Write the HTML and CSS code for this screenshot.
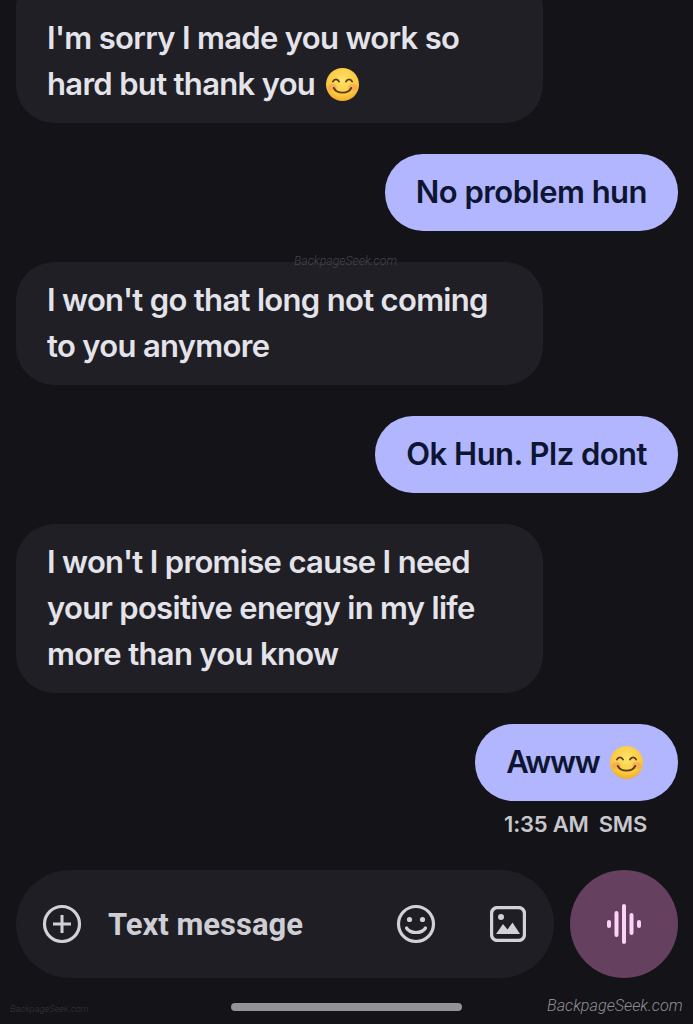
FILE: index.html
```html
<!DOCTYPE html>
<html lang="en">
<head>
    <meta charset="UTF-8">
    <meta name="viewport" content="width=device-width, initial-scale=1.0">
    <title>Messages</title>
    <link rel="stylesheet" href="styles.css">
</head>
<body>
    <svg class="defs" width="0" height="0">
        <defs>
            <radialGradient id="face" cx="50%" cy="38%" r="65%">
                <stop offset="0" stop-color="#fde36a"/>
                <stop offset="0.7" stop-color="#fbc93f"/>
                <stop offset="1" stop-color="#f0a526"/>
            </radialGradient>
            <symbol id="smile" viewBox="0 0 36 36">
                <circle cx="18" cy="18" r="17" fill="url(#face)"/>
                <ellipse cx="7.5" cy="21" rx="4.5" ry="3.5" fill="#f79a5c" opacity="0.6"/>
                <ellipse cx="28.5" cy="21" rx="4.5" ry="3.5" fill="#f79a5c" opacity="0.6"/>
                <path d="M8 15c1.5-3 5-3 6.5 0M21.5 15c1.5-3 5-3 6.5 0" fill="none" stroke="#5b3a14" stroke-width="1.8" stroke-linecap="round"/>
                <path d="M9 21.5c3 6.5 15 6.5 18 0" fill="none" stroke="#5b3a14" stroke-width="2" stroke-linecap="round"/>
            </symbol>
        </defs>
    </svg>

    <div class="thread">
        <div class="bubble received first">I'm sorry I made you work so<br>hard but thank you <svg class="emoji"><use href="#smile"/></svg></div>
        <div class="bubble sent">No problem hun</div>
        <div class="bubble received">I won't go that long not coming<br>to you anymore</div>
        <div class="bubble sent">Ok Hun. Plz dont</div>
        <div class="bubble received">I won't I promise cause I need<br>your positive energy in my life<br>more than you know</div>
        <div class="bubble sent short">Awww <svg class="emoji"><use href="#smile"/></svg></div>
        <div class="meta"><span>1:35 AM</span><span>SMS</span></div>
    </div>

    <div class="composer">
        <div class="input-pill">
            <svg class="icon" viewBox="0 0 40 40" fill="none" stroke="#d2d1d8" stroke-width="3.200">
                <circle cx="20" cy="20" r="17.500"/>
                <path d="M20 11v18M11 20h18" stroke-width="3"/>
            </svg>
            <span class="placeholder">Text message</span>
            <svg class="icon smiley" viewBox="0 0 40 40" fill="none" stroke="#d2d1d8" stroke-width="3.200">
                <circle cx="20" cy="20" r="17.500"/>
                <circle cx="13.500" cy="15.500" r="2.600" fill="#d2d1d8" stroke="none"/>
                <circle cx="26.500" cy="15.500" r="2.600" fill="#d2d1d8" stroke="none"/>
                <path d="M10.500 24c4 6 15 6 19 0" stroke-linecap="round"/>
            </svg>
            <svg class="icon gallery" viewBox="0 0 36 36" fill="none">
                <rect x="1.500" y="1.500" width="33" height="33" rx="6" stroke="#d2d1d8" stroke-width="3.400"/>
                <circle cx="11" cy="11" r="3" fill="#d2d1d8"/>
                <path d="M6 28l7-10 4.500 5.500 5-7L30 28z" fill="#d2d1d8"/>
            </svg>
        </div>
        <div class="mic">
            <svg width="36" height="40" viewBox="0 0 36 40" stroke="#fbd3f6" stroke-width="4" stroke-linecap="round">
                <path d="M3 18v4M10.500 9v22M18 2v36M25.500 11v18M33 18v4"/>
            </svg>
        </div>
    </div>

    <div class="home-bar"></div>

    <span class="mark mark-mid">BackpageSeek.com</span>
    <span class="mark mark-left">BackpageSeek.com</span>
    <span class="mark mark-right">BackpageSeek.com</span>
</body>
</html>
```

FILE: styles.css
```css
* {
    margin: 0;
    padding: 0;
    box-sizing: border-box;
}

body {
    width: 693px;
    height: 1024px;
    overflow: hidden;
    position: relative;
    background: #131318;
    font-family: 'Inter', 'Roboto', sans-serif;
}

.defs {
    position: absolute;
}

.thread {
    display: flex;
    flex-direction: column;
    gap: 31px;
    padding: 0 15px 0 16px;
    margin-top: -30px;
}

.bubble {
    font-size: 31px;
    line-height: 46px;
    font-weight: 600;
    letter-spacing: -0.68px;
    padding: 14.5px 31px 16.5px;
    border-radius: 38px;
}

.received {
    width: 527px;
    align-self: flex-start;
    background: #1f1f25;
    color: #e4e3ea;
}

.first {
    padding-top: 44.5px;
}

.sent {
    align-self: flex-end;
    background: #b1b6ff;
    color: #0e1530;
    letter-spacing: -0.52px;
}

.short {
    letter-spacing: -1.3px;
}

.emoji {
    width: 35px;
    height: 35px;
    vertical-align: -7px;
    margin-left: 3px;
}

.short .emoji {
    margin-right: 3px;
}

.meta {
    align-self: flex-end;
    display: flex;
    gap: 10px;
    margin-top: -21px;
    padding-right: 31px;
    font-size: 22px;
    line-height: 26px;
    font-weight: 600;
    letter-spacing: -0.2px;
    color: #c8c7ce;
}

.composer {
    position: absolute;
    left: 16px;
    right: 15px;
    top: 870px;
    display: flex;
    gap: 16px;
}

.input-pill {
    flex: 1;
    height: 108px;
    display: flex;
    align-items: center;
    padding: 0 28px 0 26px;
    border-radius: 54px;
    background: #1e1e24;
}

.icon {
    width: 40px;
    height: 40px;
    flex: none;
}

.placeholder {
    flex: 1;
    margin-left: 26px;
    font-family: 'Roboto', sans-serif;
    font-size: 31px;
    font-weight: 700;
    color: #cfced5;
}

.gallery {
    width: 36px;
    height: 36px;
    margin-left: 54px;
}

.mic {
    width: 108px;
    height: 108px;
    flex: none;
    display: flex;
    align-items: center;
    justify-content: center;
    border-radius: 50%;
    background: #66405f;
}

.home-bar {
    position: absolute;
    left: 231px;
    top: 1003px;
    width: 231px;
    height: 8px;
    border-radius: 4px;
    background: #949398;
}

.mark {
    position: absolute;
    font-family: 'Roboto', sans-serif;
    font-style: italic;
    font-weight: 300;
    white-space: nowrap;
}

.mark-mid {
    left: 294px;
    top: 254px;
    font-size: 12.3px;
    color: #45454b;
}

.mark-left {
    left: 10px;
    top: 1003px;
    font-size: 9.4px;
    color: #37373c;
}

.mark-right {
    left: 547px;
    top: 996px;
    font-size: 16.2px;
    color: #8f8e94;
}
```
